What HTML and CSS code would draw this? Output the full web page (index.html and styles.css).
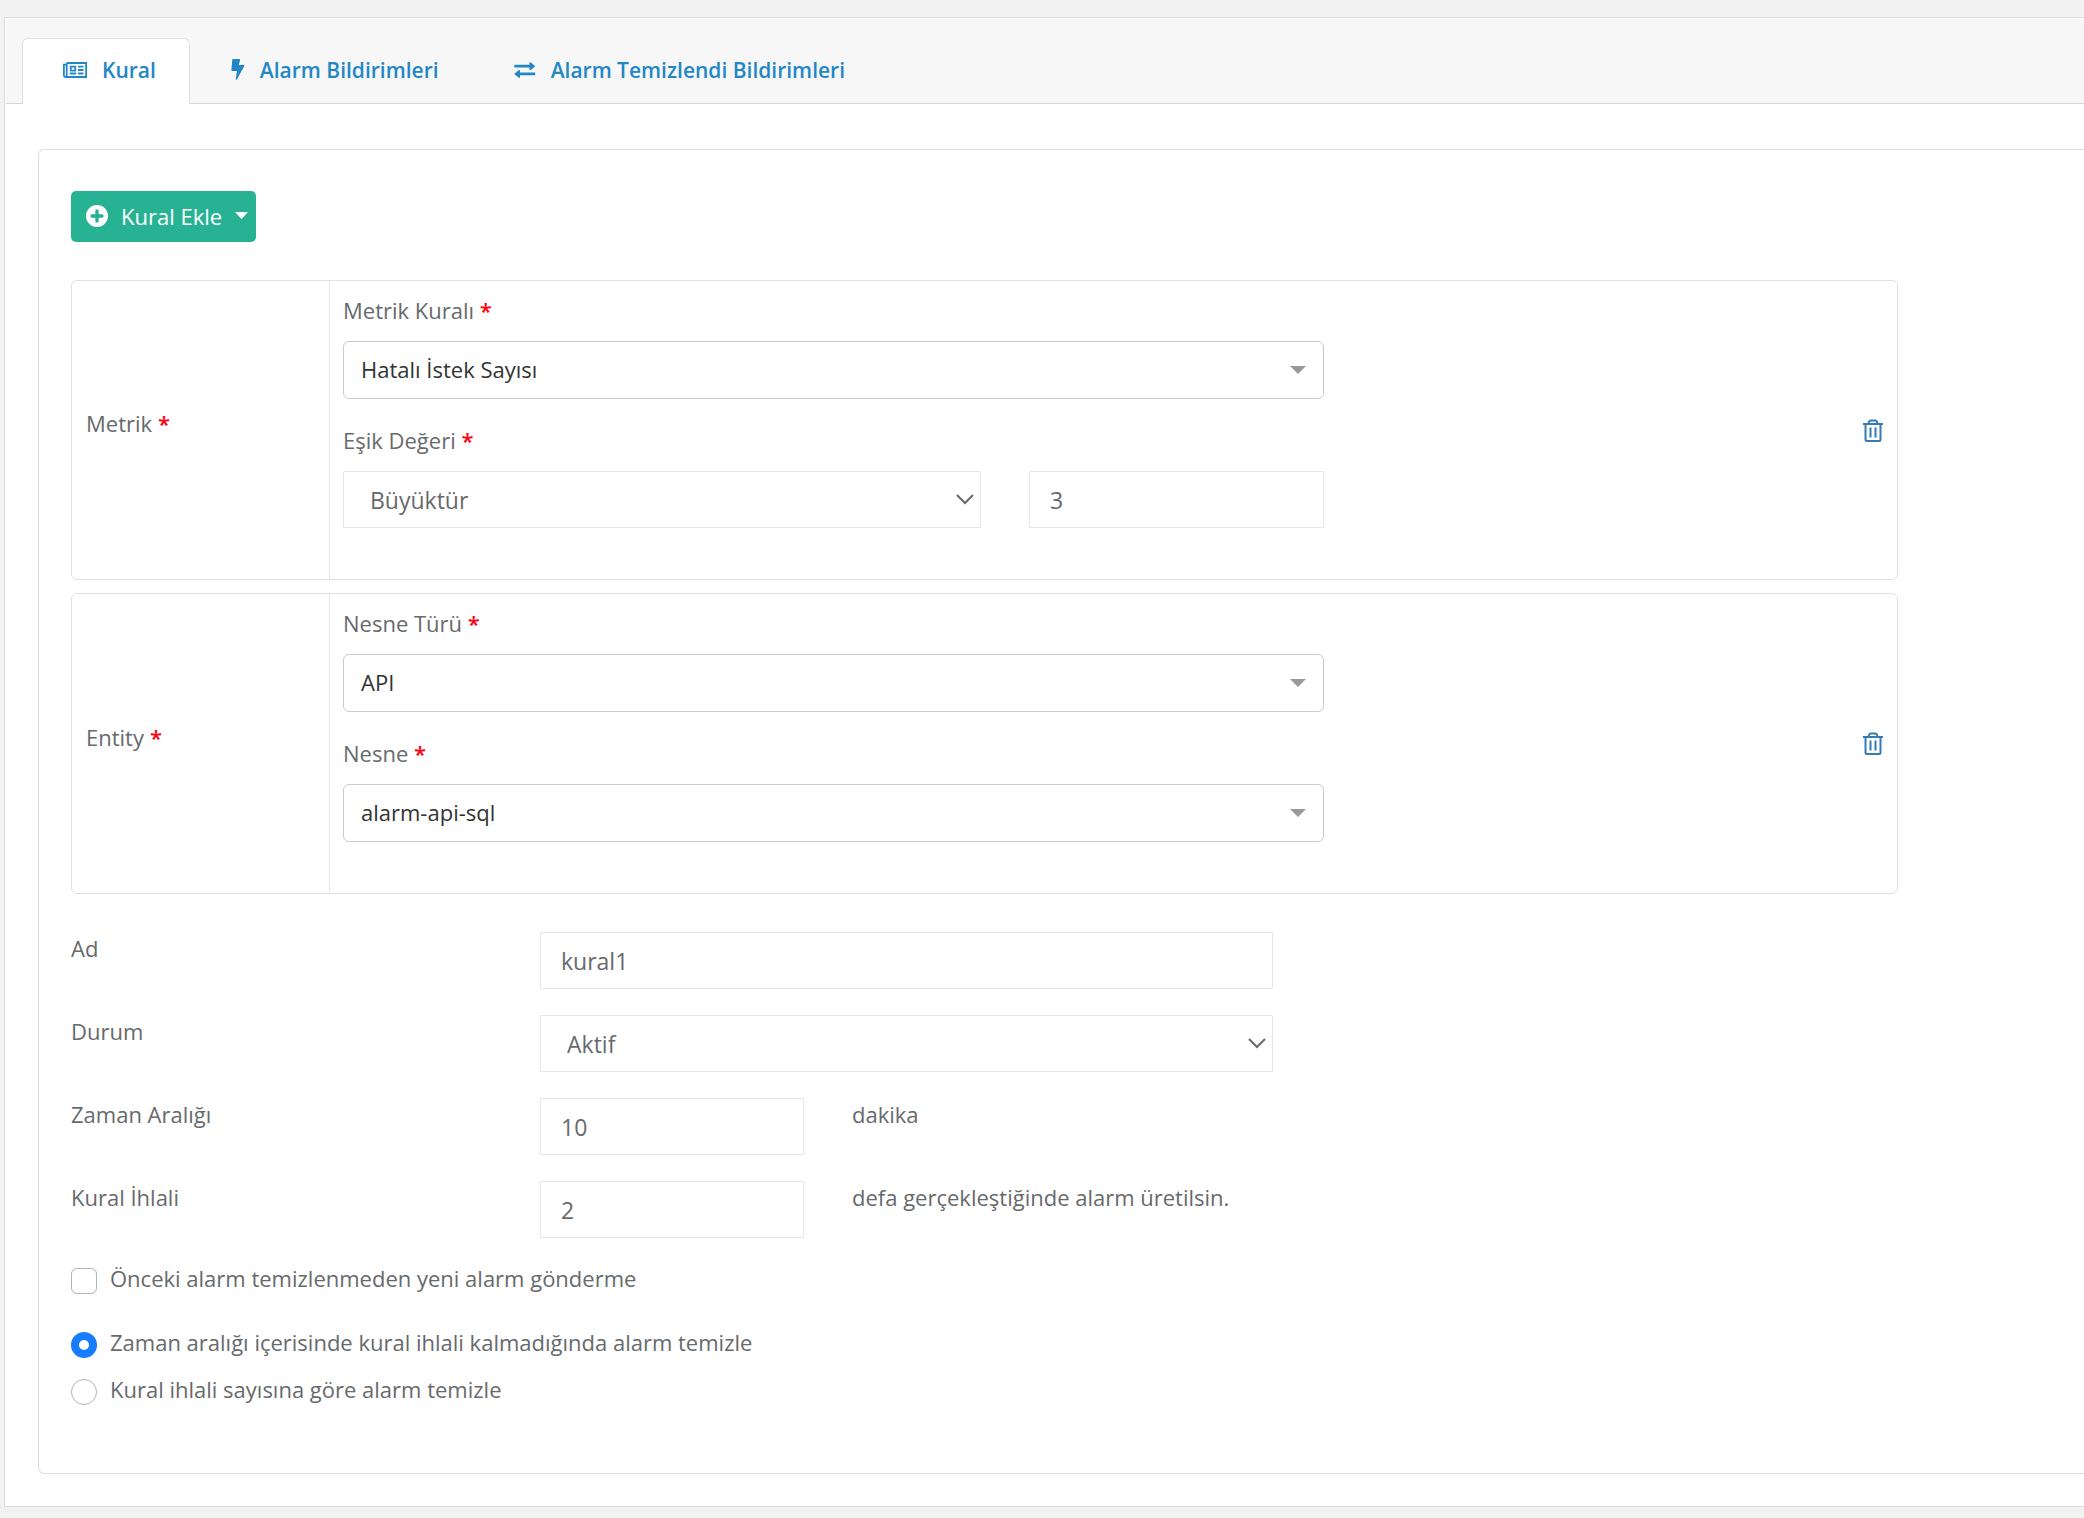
FILE: index.html
```html
<!DOCTYPE html>
<html lang="tr">
<head>
<meta charset="utf-8">
<meta name="viewport" content="width=device-width, initial-scale=1">
<title>Alarm Kuralı</title>
<link rel="stylesheet" href="styles.css">
</head>
<body>
<main class="card">
  <nav class="tabs" aria-label="Alarm">
    <a class="tab tab-active" href="#kural" aria-current="page">
      <svg class="icon icon-news" viewBox="0 0 24 16" aria-hidden="true"><path fill="none" stroke="currentColor" stroke-width="1.800" d="M3.700 1H23.100V15H2.200Q.9 15 .9 13.500V2.600H3.700M3.700 1V13.500Q3.700 15 2.200 15"/><path fill="none" stroke="currentColor" stroke-width="1.800" d="M7.700 4.700h4.600v4H7.700zM15 4.700h5.500M15 8h5.500M6.800 11.500h6.500M15 11.500h5.500"/></svg>
      <span>Kural</span>
    </a>
    <a class="tab" href="#bildirimler">
      <svg class="icon icon-bolt" viewBox="0 0 14 21" aria-hidden="true"><path fill="currentColor" d="M2 0H8.500Q9.400 0 9.100 1L7.800 6H12.600Q13.800 6 13.200 7.200L6 20.300Q5.300 21.300 4.700 20.300L6 12H1.200Q.3 12 .4 11L1.200 1Q1.200 0 2 0Z"/></svg>
      <span>Alarm Bildirimleri</span>
    </a>
    <a class="tab" href="#temizlendi">
      <svg class="icon icon-swap" viewBox="0 0 22 16" aria-hidden="true"><path fill="currentColor" d="M.8 2.700H15.500V.8Q15.700-.1 16.600.3L20.800 3.700Q21.200 4.200 20.800 4.700L16.600 8Q15.700 8.400 15.500 7.500V5.400H.8Q.3 5.400.3 4.900V3.200Q.3 2.700 .8 2.700ZM20.700 10.500H6V8.600Q5.800 7.700 4.900 8.100L.7 11.400Q.3 11.900.7 12.400L4.900 15.800Q5.800 16.200 6 15.300V13.200H20.700Q21.200 13.200 21.200 12.700V11Q21.200 10.500 20.700 10.500Z"/></svg>
      <span>Alarm Temizlendi Bildirimleri</span>
    </a>
  </nav>

  <form class="panel" id="kural">
    <button class="add" type="button">
      <svg class="icon icon-plus" viewBox="0 0 22 22" aria-hidden="true"><circle cx="11" cy="11" r="11" fill="#fff"/><path stroke="#28b294" stroke-width="3.400" stroke-linecap="round" d="M6 11h10M11 6v10"/></svg>
      <span>Kural Ekle</span>
      <svg class="icon icon-caret" viewBox="0 0 13 7" aria-hidden="true"><path fill="#fff" d="M0 0h13L6.500 7z"/></svg>
    </button>

    <div class="rules">
      <section class="rule">
        <h2 class="rule-name">Metrik <b class="req">*</b></h2>
        <div class="rule-fields">
          <div class="field">
            <label for="metric">Metrik Kuralı <b class="req">*</b></label>
            <div class="picker">
              <select class="control control-strong" id="metric"><option>Hatalı İstek Sayısı</option></select>
              <svg class="arrow arrow-solid" viewBox="0 0 16 8" aria-hidden="true"><path fill="#999" d="M0 0h16L8 8z"/></svg>
            </div>
          </div>
          <div class="field">
            <label for="operator">Eşik Değeri <b class="req">*</b></label>
            <div class="threshold">
              <div class="picker">
                <select class="control control-select" id="operator"><option>Büyüktür</option></select>
                <svg class="arrow arrow-line" viewBox="0 0 18 11" aria-hidden="true"><path fill="none" stroke="#676a6c" stroke-width="2" d="M1 1l8 8 8-8"/></svg>
              </div>
              <input class="control" type="text" value="3" aria-label="Eşik değeri">
            </div>
          </div>
        </div>
        <button class="trash" type="button" aria-label="Metrik kuralını sil">
          <svg class="icon-trash" viewBox="0 0 20 23" aria-hidden="true"><path fill="none" stroke="currentColor" stroke-width="2" d="M0 5h20M2.500 5V20.500Q2.500 22 4 22H16Q17.500 22 17.500 20.500V5M5.500 4.500Q6 1.500 8 1.500H12Q14 1.500 14.500 4.500M7.500 8.500V18.500M12.500 8.500V18.500"/></svg>
        </button>
      </section>

      <section class="rule">
        <h2 class="rule-name">Entity <b class="req">*</b></h2>
        <div class="rule-fields">
          <div class="field">
            <label for="kind">Nesne Türü <b class="req">*</b></label>
            <div class="picker">
              <select class="control control-strong" id="kind"><option>API</option></select>
              <svg class="arrow arrow-solid" viewBox="0 0 16 8" aria-hidden="true"><path fill="#999" d="M0 0h16L8 8z"/></svg>
            </div>
          </div>
          <div class="field">
            <label for="object">Nesne <b class="req">*</b></label>
            <div class="picker">
              <select class="control control-strong" id="object"><option>alarm-api-sql</option></select>
              <svg class="arrow arrow-solid" viewBox="0 0 16 8" aria-hidden="true"><path fill="#999" d="M0 0h16L8 8z"/></svg>
            </div>
          </div>
        </div>
        <button class="trash" type="button" aria-label="Entity kuralını sil">
          <svg class="icon-trash" viewBox="0 0 20 23" aria-hidden="true"><path fill="none" stroke="currentColor" stroke-width="2" d="M0 5h20M2.500 5V20.500Q2.500 22 4 22H16Q17.500 22 17.500 20.500V5M5.500 4.500Q6 1.500 8 1.500H12Q14 1.500 14.500 4.500M7.500 8.500V18.500M12.500 8.500V18.500"/></svg>
        </button>
      </section>
    </div>

    <div class="settings">
      <div class="row">
        <label for="name">Ad</label>
        <input class="control" id="name" type="text" value="kural1">
      </div>
      <div class="row">
        <label for="status">Durum</label>
        <div class="picker">
          <select class="control control-select" id="status"><option>Aktif</option></select>
          <svg class="arrow arrow-line" viewBox="0 0 18 11" aria-hidden="true"><path fill="none" stroke="#676a6c" stroke-width="2" d="M1 1l8 8 8-8"/></svg>
        </div>
      </div>
      <div class="row">
        <label for="interval">Zaman Aralığı</label>
        <div class="amount">
          <input class="control" id="interval" type="text" value="10">
          <span>dakika</span>
        </div>
      </div>
      <div class="row">
        <label for="count">Kural İhlali</label>
        <div class="amount">
          <input class="control" id="count" type="text" value="2">
          <span>defa gerçekleştiğinde alarm üretilsin.</span>
        </div>
      </div>
    </div>

    <label class="choice choice-apart"><input type="checkbox"><span>Önceki alarm temizlenmeden yeni alarm gönderme</span></label>
    <label class="choice"><input type="radio" name="clear" checked><span>Zaman aralığı içerisinde kural ihlali kalmadığında alarm temizle</span></label>
    <label class="choice"><input type="radio" name="clear"><span>Kural ihlali sayısına göre alarm temizle</span></label>
  </form>
</main>
</body>
</html>
```
FILE: styles.css
```css
* {
  box-sizing: border-box;
}

body {
  margin: 0;
  padding: 17px 0 11px 4px;
  background: #f2f2f2;
  color: #676a6c;
  font: 22px/32px "Open Sans", "Noto Sans", sans-serif;
}

.card {
  padding: 1px 0 32px 1px;
  border: 1px solid #dcdddf;
  border-right: 0;
  background: #fff;
}

/* Tabs */
.tabs {
  display: flex;
  align-items: flex-end;
  height: 85px;
  padding-left: 16px;
  border-bottom: 1px solid #d5d6d8;
  border-top-left-radius: 5px;
  background: #f7f7f7;
}

.tab {
  display: flex;
  align-items: center;
  gap: 15px;
  height: 66px;
  margin-bottom: -1px;
  padding: 0 33px 4px 40px;
  border: 1px solid transparent;
  border-bottom: 0;
  border-radius: 6px 6px 0 0;
  color: #2387c6;
  font-size: 21px;
  font-weight: 600;
  text-decoration: none;
}

.tab-active {
  border-color: #dee2e6;
  background: #fff;
}

.icon {
  flex: none;
}

.icon-news {
  width: 24px;
  height: 16px;
}

.icon-bolt {
  width: 14px;
  height: 21px;
}

.icon-swap {
  width: 22px;
  height: 16px;
}

/* Panel */
.panel {
  margin: 45px 0 0 32px;
  padding: 41px 186px 68px 32px;
  border: 1px solid #dcdddf;
  border-right: 0;
  border-radius: 6px 0 0 6px;
}

.add {
  display: flex;
  align-items: center;
  height: 51px;
  padding: 0 8px 2px 15px;
  border: 0;
  border-radius: 5px;
  background: #28b294;
  color: #fff;
  font: inherit;
}

.icon-plus {
  width: 22px;
  height: 22px;
  margin-right: 13px;
}

.icon-caret {
  width: 13px;
  height: 7px;
  margin-left: 13px;
}

/* Rules */
.rules {
  display: grid;
  gap: 13px;
  margin-top: 38px;
}

.rule {
  display: grid;
  grid-template-columns: 258px 1fr auto;
  border: 1px solid #dee2e6;
  border-radius: 6px;
}

.rule-name {
  display: flex;
  align-items: center;
  gap: 6px;
  margin: 0;
  padding: 0 14px 14px;
  border-right: 1px solid #e3e5e7;
  font-size: 22px;
  font-weight: 400;
}

.req {
  color: #f01;
  font-weight: 600;
}

.rule-fields {
  display: grid;
  gap: 25px;
  max-width: 1007px;
  padding: 13px 13px 51px;
}

.field {
  display: grid;
  gap: 15px;
}

.control {
  width: 100%;
  height: 57px;
  padding: 0 20px;
  border: 1px solid #e5e6e7;
  border-radius: 1px;
  appearance: none;
  background: #fff;
  color: #676a6c;
  font: inherit;
  font-size: 23px;
}

.control-select {
  padding: 0 26px;
}

.control-strong {
  height: 58px;
  padding: 0 17px 2px;
  border-color: #c9cacc;
  border-radius: 6px;
  color: #333;
  font-size: 22px;
}

.picker {
  display: grid;
  align-items: center;
}

.picker > * {
  grid-area: 1 / 1;
}

.arrow {
  justify-self: end;
  pointer-events: none;
}

.arrow-solid {
  width: 16px;
  height: 8px;
  margin-right: 18px;
}

.arrow-line {
  width: 18px;
  height: 11px;
  margin-right: 7px;
}

.threshold {
  display: grid;
  grid-template-columns: 638fr 295fr;
  gap: 48px;
}

.trash {
  align-self: center;
  margin-right: 14px;
  padding: 0;
  border: 0;
  background: none;
  color: #337ab7;
}

.icon-trash {
  display: block;
  width: 20px;
  height: 23px;
}

/* Settings */
.settings {
  display: grid;
  gap: 26px;
  margin-top: 38px;
}

.row {
  display: grid;
  grid-template-columns: 469px minmax(0, 733px);
}

.amount {
  display: grid;
  grid-template-columns: 264px 1fr;
  gap: 48px;
}

.choice {
  display: flex;
  gap: 13px;
  margin-top: 15px;
}

.choice-apart {
  margin: 24px 0 32px;
}

.choice input {
  appearance: none;
  width: 26px;
  height: 26px;
  margin: 6px 0 0;
  border: 1px solid #adb5bd;
  border-radius: 6px;
  background: #fff;
}

.choice input[type="radio"] {
  border-radius: 50%;
}

.choice input:checked {
  border: 8px solid #167dff;
}
```
